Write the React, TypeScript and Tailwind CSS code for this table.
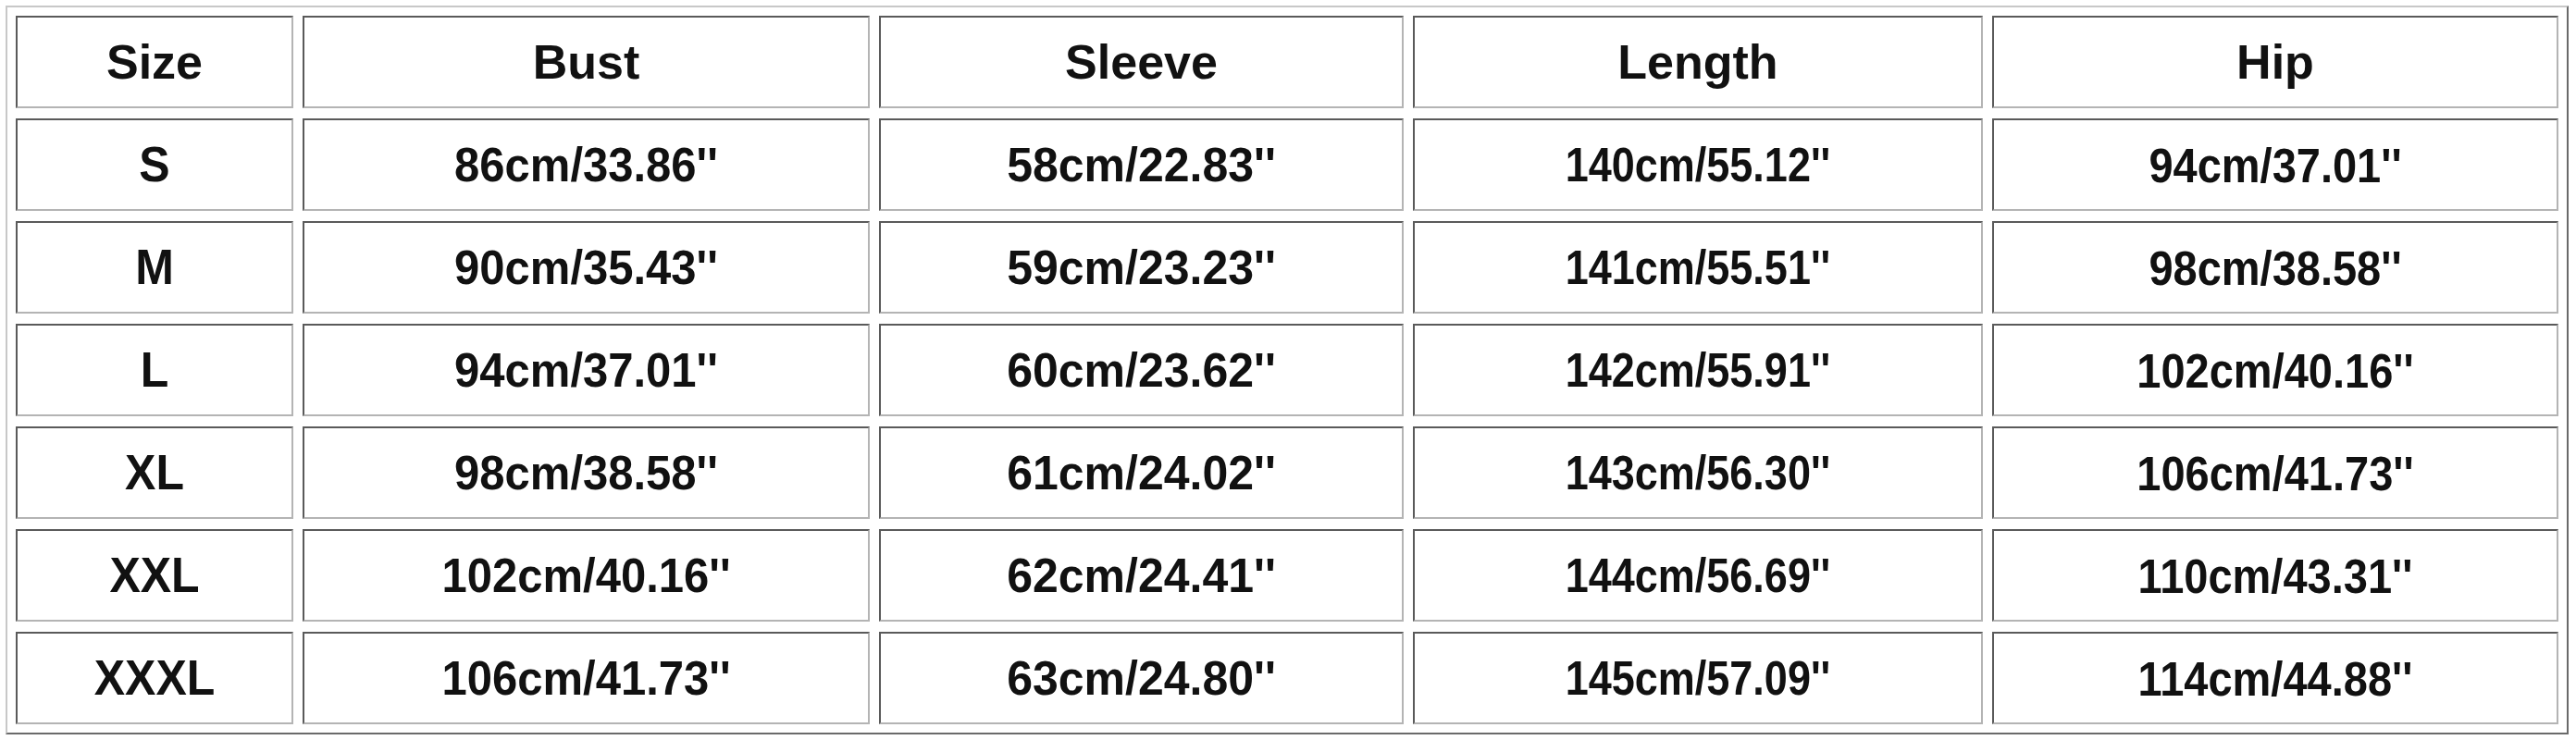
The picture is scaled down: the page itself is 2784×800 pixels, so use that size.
const headers = ["Size", "Bust", "Sleeve", "Length", "Hip"];

const rows = [
  ["S", "86cm/33.86''", "58cm/22.83''", "140cm/55.12''", "94cm/37.01''"],
  ["M", "90cm/35.43''", "59cm/23.23''", "141cm/55.51''", "98cm/38.58''"],
  ["L", "94cm/37.01''", "60cm/23.62''", "142cm/55.91''", "102cm/40.16''"],
  ["XL", "98cm/38.58''", "61cm/24.02''", "143cm/56.30''", "106cm/41.73''"],
  ["XXL", "102cm/40.16''", "62cm/24.41''", "144cm/56.69''", "110cm/43.31''"],
  ["XXXL", "106cm/41.73''", "63cm/24.80''", "145cm/57.09''", "114cm/44.88''"],
];

// each column of the source image is scaled a little differently
const colText = [
  "scale-y-[1.08] text-[50px]",
  "scale-y-[1.06] text-[49px]",
  "scale-y-[1.04] text-[50px]",
  "scale-y-[1.16] text-[45px]",
  "scale-y-[1.1] text-[47px]",
];

function Cell({ text, cls }: { text: string; cls: string }) {
  return (
    <div className="flex h-[100px] items-center justify-center border-2 border-t-[#5a5a5a] border-l-[#5a5a5a] border-r-[#b4b4b4] border-b-[#b4b4b4] bg-white">
      <span className={`${cls} font-bold leading-none text-[#111]`}>{text}</span>
    </div>
  );
}

export default function App() {
  return (
    <div className="h-[800px] w-[2784px] bg-white pl-[6px] pt-[6px] font-['Liberation_Sans',Arial,sans-serif]">
      <div className="w-[2770px] border-2 border-t-[#c8c8c8] border-l-[#c8c8c8] border-r-[#6a6a6a] border-b-[#6a6a6a] p-[9px]">
        <div className="grid grid-cols-[300px_613px_567px_616px_612px] gap-x-[10px] gap-y-[11px]">
          {headers.map((h) => (
            <Cell key={h} text={h} cls="text-[52px]" />
          ))}
          {rows.map((r) => r.map((c, i) => <Cell key={r[0] + i} text={c} cls={colText[i]} />))}
        </div>
      </div>
    </div>
  );
}
